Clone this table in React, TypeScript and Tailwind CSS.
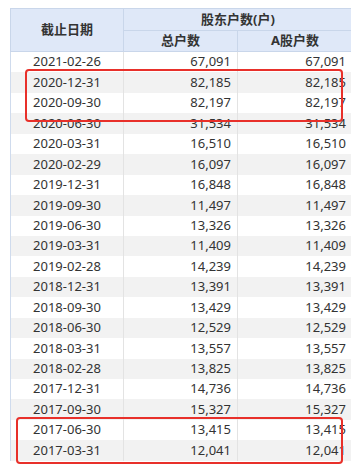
import React from "react";

const rows: [string, string, string][] = [
  ["2021-02-26", "67,091", "67,091"],
  ["2020-12-31", "82,185", "82,185"],
  ["2020-09-30", "82,197", "82,197"],
  ["2020-06-30", "31,534", "31,534"],
  ["2020-03-31", "16,510", "16,510"],
  ["2020-02-29", "16,097", "16,097"],
  ["2019-12-31", "16,848", "16,848"],
  ["2019-09-30", "11,497", "11,497"],
  ["2019-06-30", "13,326", "13,326"],
  ["2019-03-31", "11,409", "11,409"],
  ["2019-02-28", "14,239", "14,239"],
  ["2018-12-31", "13,391", "13,391"],
  ["2018-09-30", "13,429", "13,429"],
  ["2018-06-30", "12,529", "12,529"],
  ["2018-03-31", "13,557", "13,557"],
  ["2018-02-28", "13,825", "13,825"],
  ["2017-12-31", "14,736", "14,736"],
  ["2017-09-30", "15,327", "15,327"],
  ["2017-06-30", "13,415", "13,415"],
  ["2017-03-31", "12,041", "12,041"],
];

export default function App() {
  return (
    <div
      className="relative w-[351px] h-[471px] overflow-hidden bg-white pt-[8px] pl-[10px] text-[#333333]"
      style={{ fontFamily: '"Noto Sans", "Noto Sans CJK SC", sans-serif' }}
    >
      <div className="w-[341px]">
        {/* header */}
        <div className="grid grid-cols-[113px_114px_114px] grid-rows-[22px_21px] bg-[#dfe8f8] border-t border-l border-[#c9d6ea] text-[13px] font-bold">
          <div className="row-span-2 flex items-center justify-center border-r border-b border-[#c9d6ea]">
            截止日期
          </div>
          <div className="col-span-2 flex items-center justify-center border-b border-[#c9d6ea]">
            股东户数(户)
          </div>
          <div className="flex items-center justify-center border-r border-b border-[#c9d6ea]">
            总户数
          </div>
          <div className="flex items-center justify-center border-b border-[#c9d6ea]">
            A股户数
          </div>
        </div>
        {/* body */}
        <div className="border-l border-[#cfdbed] text-[13px]">
          {rows.map((r, i) => (
            <div
              key={r[0]}
              className={`grid grid-cols-[113px_114px_114px] h-[20.45px] items-center ${
                i % 2 === 1 ? "bg-[#f2f2f2]" : "bg-white"
              }`}
            >
              <div className="h-full flex items-center justify-center border-r border-[#e3e3e3]">
                {r[0]}
              </div>
              <div className="h-full flex items-center justify-end pr-[6px] border-r border-[#e3e3e3]">
                {r[1]}
              </div>
              <div className="h-full flex items-center justify-end pr-[6px]">
                {r[2]}
              </div>
            </div>
          ))}
        </div>
      </div>
      {/* highlight boxes */}
      <div className="absolute left-[25px] top-[69px] w-[318px] h-[53px] border-2 border-[#e8302a] rounded-[4px]" />
      <div className="absolute left-[16px] top-[417px] w-[327px] h-[47px] border-2 border-[#e8302a] rounded-[4px]" />
    </div>
  );
}
